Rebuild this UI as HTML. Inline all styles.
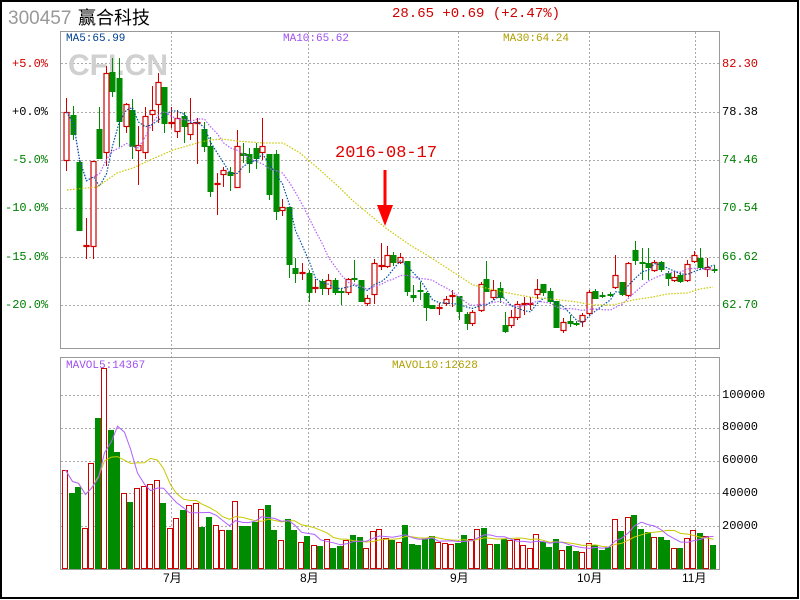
<!DOCTYPE html>
<html><head><meta charset="utf-8">
<style>
body{margin:0;width:800px;height:600px;overflow:hidden;background:#fff;position:relative;font-family:"Liberation Mono",monospace}
.t{position:absolute;white-space:nowrap;font-size:12px;line-height:12px}
svg{position:absolute;left:0;top:0}
</style></head><body>
<svg id="s" width="800" height="600" xmlns="http://www.w3.org/2000/svg">
<rect x="1" y="1" width="797" height="597" fill="none" stroke="#000" stroke-width="2"/>
<g stroke="#aaa" stroke-dasharray="2,2" stroke-width="1">
<line x1="61" y1="63.5" x2="720" y2="63.5"/><line x1="61" y1="112.5" x2="720" y2="112.5"/><line x1="61" y1="160.5" x2="720" y2="160.5"/><line x1="61" y1="208.5" x2="720" y2="208.5"/><line x1="61" y1="257.5" x2="720" y2="257.5"/><line x1="61" y1="305.5" x2="720" y2="305.5"/>
<line x1="61" y1="395.5" x2="720" y2="395.5"/><line x1="61" y1="428.5" x2="720" y2="428.5"/><line x1="61" y1="461.5" x2="720" y2="461.5"/><line x1="61" y1="493.5" x2="720" y2="493.5"/><line x1="61" y1="526.5" x2="720" y2="526.5"/>
<line x1="171.5" y1="32" x2="171.5" y2="569"/><line x1="308.5" y1="32" x2="308.5" y2="569"/><line x1="458.5" y1="32" x2="458.5" y2="569"/><line x1="589.5" y1="32" x2="589.5" y2="569"/><line x1="695.5" y1="32" x2="695.5" y2="569"/>
</g>
<text x="68" y="75" font-family="Liberation Sans,sans-serif" font-weight="bold" font-size="30" fill="#d0d0d0">CFI.CN</text>
<rect x="60.5" y="31.5" width="659" height="317" fill="none" stroke="#999"/>
<rect x="60.5" y="357.5" width="659" height="212" fill="none" stroke="#999"/>
<g id="g"></g>
<polyline fill="none" stroke="#c8c800" stroke-width="1.2" stroke-dasharray="1.5,1.5" points="67,190 97,187 117,173 133,168 150,160 173,150 197,143 210,140 223,139 237,141 263,143 283,143 300,153 320,170 340,188 352,200 370,215 387,229 410,245 430,257 450,270 473,285 503,292 530,297 560,300 577,302 593,305 613,305 633,300 653,297 667,294 687,293 700,289 713,287"/>
<line x1="385" y1="170" x2="385" y2="214" stroke="#f00" stroke-width="3"/>
<polygon points="377,205 393,205 385,226" fill="#f00"/>
</svg>
<div class="t" style="left:8px;top:9px;font-family:'Liberation Sans',sans-serif;font-size:19px;line-height:20px;color:#999">300457</div>
<div class="t" style="left:78px;top:8px;font-family:'Liberation Sans','Noto Sans CJK SC',sans-serif;font-size:18px;line-height:20px;color:#000">赢合科技</div>
<div class="t" style="left:392px;top:7px;font-size:14px;line-height:14px;color:#d00000">28.65 +0.69 (+2.47%)</div>
<div class="t" style="left:66px;top:33px;font-size:11px;color:#004090">MA5:65.99</div>
<div class="t" style="left:283px;top:33px;font-size:11px;color:#a050f0">MA10:65.62</div>
<div class="t" style="left:503px;top:33px;font-size:11px;color:#b0a000">MA30:64.24</div>
<div class="t" style="left:66px;top:360px;font-size:11px;color:#a050f0">MAVOL5:14367</div>
<div class="t" style="left:392px;top:360px;font-size:11px;color:#b0a000">MAVOL10:12628</div>
<div class="t" style="left:335px;top:145px;font-size:17px;line-height:17px;color:#e00000">2016-08-17</div>
<div class="t" style="left:12px;top:58px;color:#d00000">+5.0%</div>
<div class="t" style="left:12px;top:106px;color:#000">+0.0%</div>
<div class="t" style="left:12px;top:154px;color:#008000">-5.0%</div>
<div class="t" style="left:5px;top:202px;color:#008000">-10.0%</div>
<div class="t" style="left:5px;top:251px;color:#008000">-15.0%</div>
<div class="t" style="left:5px;top:299px;color:#008000">-20.0%</div>
<div class="t" style="left:722px;top:58px;color:#d00000">82.30</div>
<div class="t" style="left:722px;top:106px;color:#000">78.38</div>
<div class="t" style="left:722px;top:154px;color:#008000">74.46</div>
<div class="t" style="left:722px;top:202px;color:#008000">70.54</div>
<div class="t" style="left:722px;top:251px;color:#008000">66.62</div>
<div class="t" style="left:722px;top:299px;color:#008000">62.70</div>
<div class="t" style="left:722px;top:389px">100000</div>
<div class="t" style="left:722px;top:421px">80000</div>
<div class="t" style="left:722px;top:454px">60000</div>
<div class="t" style="left:722px;top:487px">40000</div>
<div class="t" style="left:722px;top:520px">20000</div>
<div class="t" style="left:163px;top:572px;font-family:'Liberation Sans','Noto Sans CJK SC',sans-serif">7月</div>
<div class="t" style="left:300px;top:572px;font-family:'Liberation Sans','Noto Sans CJK SC',sans-serif">8月</div>
<div class="t" style="left:450px;top:572px;font-family:'Liberation Sans','Noto Sans CJK SC',sans-serif">9月</div>
<div class="t" style="left:577px;top:572px;font-family:'Liberation Sans','Noto Sans CJK SC',sans-serif">10月</div>
<div class="t" style="left:682px;top:572px;font-family:'Liberation Sans','Noto Sans CJK SC',sans-serif">11月</div>
<script>
var C=[[66,112,161,98,171,'r'],[73,115,135,106,140,'g'],[79,162,231,160,231,'g'],[86,245,247,218,259,'r'],[93,161,247,161,259,'r'],[99,129,159,107,159,'g'],[106,73,153,66,166,'r'],[112,72,92,58,97,'g'],[119,78,122,58,147,'g'],[126,104,127,103,133,'r'],[132,110,147,99,159,'g'],[138,145,151,126,185,'r'],[145,116,153,107,159,'r'],[152,110,115,86,131,'r'],[158,82,105,73,123,'r'],[164,87,124,87,133,'g'],[171,122,124,107,128,'r'],[177,118,132,110,138,'r'],[184,116,127,112,143,'g'],[190,123,135,98,140,'r'],[197,122,124,118,164,'r'],[204,129,147,122,152,'g'],[210,146,192,137,197,'g'],[217,183,185,173,215,'r'],[223,170,175,167,187,'r'],[230,172,176,167,191,'g'],[237,146,188,130,188,'r'],[243,153,156,143,163,'g'],[249,154,164,148,173,'g'],[256,148,159,143,169,'g'],[262,146,153,118,160,'r'],[269,154,195,154,200,'g'],[276,154,212,150,220,'g'],[282,207,211,199,216,'r'],[289,207,265,207,278,'g'],[295,268,274,258,283,'g'],[302,272,274,263,280,'r'],[309,273,293,270,302,'g'],[315,287,289,279,293,'r'],[322,281,289,279,295,'g'],[328,280,289,274,295,'r'],[335,280,293,278,295,'g'],[341,291,293,288,305,'g'],[348,279,293,278,295,'r'],[354,278,280,260,282,'g'],[361,280,302,280,302,'g'],[367,298,304,295,306,'r'],[374,263,295,259,304,'r'],[381,265,267,243,270,'r'],[387,255,267,246,268,'r'],[393,255,263,252,266,'g'],[400,257,263,253,264,'r'],[407,261,292,261,296,'g'],[413,295,298,285,302,'g'],[420,290,292,282,300,'g'],[426,293,308,292,321,'g'],[432,305,309,305,309,'g'],[439,307,309,303,315,'r'],[446,299,304,296,306,'r'],[452,295,297,290,307,'r'],[459,296,312,296,320,'g'],[467,314,324,312,330,'g'],[472,312,324,310,326,'r'],[481,284,311,282,312,'r'],[486,279,292,261,292,'g'],[493,290,298,280,300,'r'],[500,288,298,282,303,'g'],[505,325,332,312,333,'g'],[511,317,326,310,328,'r'],[517,304,318,301,320,'r'],[524,303,305,297,315,'r'],[530,303,305,297,310,'r'],[537,289,295,279,299,'r'],[543,284,293,284,296,'g'],[550,291,302,288,304,'g'],[556,301,328,301,328,'g'],[563,322,331,318,333,'r'],[570,321,324,315,327,'g'],[576,323,325,321,326,'g'],[582,315,322,313,327,'r'],[589,292,314,290,315,'r'],[595,291,299,289,299,'g'],[602,295,297,292,298,'g'],[610,294,296,292,297,'g'],[615,275,288,255,289,'r'],[622,282,295,282,296,'g'],[628,263,296,262,297,'r'],[635,250,261,241,265,'g'],[642,262,264,248,280,'g'],[648,263,268,248,280,'g'],[654,262,271,260,272,'r'],[661,262,270,261,272,'g'],[668,273,279,271,286,'g'],[674,277,281,272,282,'r'],[680,275,282,272,283,'g'],[687,264,281,260,282,'r'],[694,255,262,251,263,'r'],[700,258,268,248,270,'g'],[707,267,270,258,277,'r'],[714,269,271,265,273,'g']];
var V=[470,493,487,528,463,418,368,430,452,493,502,488,486,484,480,503,528,518,510,505,503,527,517,525,530,530,501,526,526,522,509,505,530,540,519,530,542,536,545,546,539,548,546,540,535,537,548,531,529,538,540,542,525,544,545,539,536,542,543,544,543,535,539,529,528,544,544,539,540,539,545,548,534,542,547,539,550,546,551,552,543,545,550,547,519,531,517,515,529,532,537,537,540,548,548,538,530,533,536,545];
var VC="rggrrgrggrgrrrrgrrgrrggrrgrgggrggrggrgrgrggrggrrrrgrgggggrrrggrrgrggrrrrrgggrggrrgggrgrgggrggrgrrgrg";
var R="#d00000",G="#008c00",h="";
function ln(x1,y1,x2,y2,c){return '<line x1="'+x1+'" y1="'+y1+'" x2="'+x2+'" y2="'+y2+'" stroke="'+c+'"/>';}
var n=V.length,step=(713-65)/(n-1),vh=[];
for(var i=0;i<n;i++){var x=Math.round(65+i*step),t=V[i];vh.push(569-t);
 if(VC[i]=='r')h+='<rect x="'+(x-2.5)+'" y="'+(t+.5)+'" width="5" height="'+(568-t)+'" fill="#fff" stroke="'+R+'"/>';
 else h+='<rect x="'+(x-3)+'" y="'+t+'" width="6" height="'+(569-t)+'" fill="'+G+'"/>';}
C.forEach(function(c){var x=c[0],col=c[5]=='r'?R:G;
 h+=ln(x+.5,c[3],x+.5,c[4],col);
 if(c[5]=='r'){var hh=c[2]-c[1];if(hh<2)h+='<rect x="'+(x-2)+'" y="'+(c[1]-1)+'" width="6" height="3" fill="'+R+'"/>';
  else h+='<rect x="'+(x-2)+'" y="'+(c[1]+.5)+'" width="5" height="'+(hh-1)+'" fill="#fff" stroke="'+R+'" stroke-width="1.2"/>';}
 else h+='<rect x="'+(x-2.5)+'" y="'+c[1]+'" width="6" height="'+Math.max(2,c[2]-c[1])+'" fill="'+G+'"/>';});
function ma(arr,k){var o=[];for(var i=0;i<arr.length;i++){var s=0,m=0;for(var j=Math.max(0,i-k+1);j<=i;j++){s+=arr[j];m++;}o.push(s/m);}return o;}
var cl=C.map(function(c){return c[5]=='r'?c[1]:c[2];});
function pl(xs,ys,col,dash,w){var p=xs.map(function(x,i){return x+','+ys[i].toFixed(1)}).join(' ');return '<polyline fill="none" stroke="'+col+'" stroke-width="'+w+'" '+(dash?'stroke-dasharray="1.5,1.5"':'')+' points="'+p+'"/>';}
var xs=C.map(function(c){return c[0]+.5});
h+=pl(xs,ma(cl,10),"#b060ff",1,1.2);
h+=pl(xs,ma(cl,5),"#0050a0",1,1.2);
var vx=vh.map(function(v,i){return Math.round(65+i*step)+.5});
h+=pl(vx,ma(vh,10).map(function(v){return 569-v}),"#c8c800",0,1);
h+=pl(vx,ma(vh,5).map(function(v){return 569-v}),"#b060ff",0,1);
document.getElementById("g").innerHTML=h;
</script>
</body></html>
